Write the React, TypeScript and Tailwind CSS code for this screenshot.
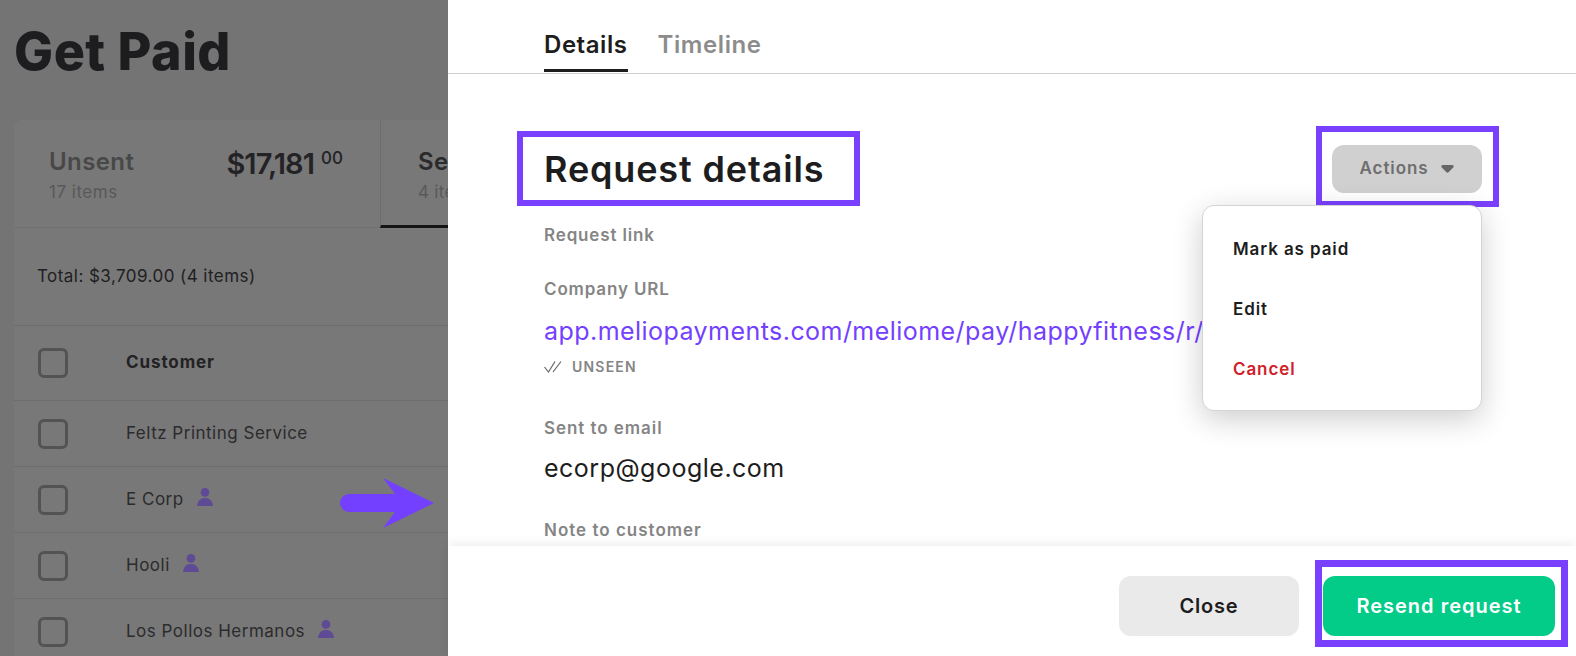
const customers = [
  { name: "Feltz Printing Service", linked: false },
  { name: "E Corp", linked: true },
  { name: "Hooli", linked: true },
  { name: "Los Pollos Hermanos", linked: true },
];

const PersonIcon = () => (
  <svg width="16" height="18" viewBox="0 0 16 18" fill="#5f4a96" className="ml-[13px] mb-[6px] shrink-0">
    <circle cx="8" cy="4.4" r="4.3" />
    <path d="M0 18C.6 12.4 3.8 10 8 10s7.4 2.4 8 8z" />
  </svg>
);

const Checkbox = () => <div className="w-[30px] h-[30px] rounded-[6px] border-[3px] border-[#535353] shrink-0" />;

const GetPaidPanel = () => (
  <aside className="w-[448px] shrink-0 h-full overflow-hidden bg-[#747474]">
    <h1 className="pl-[14px] pt-[24px] h-[80px] text-[52px] leading-[56px] font-extrabold text-[#1d1d20] tracking-[0.5px]">Get Paid</h1>
    <div className="mt-[40px] ml-[14px] w-[600px] h-[600px] rounded-t-lg bg-[#787878]">
      <div className="flex h-[108px] border-b border-[#707070]">
        <div className="w-[366px] shrink-0 pl-[35px] pr-[37px] pt-[27px] flex justify-between">
          <div>
            <div className="text-[24px] leading-[30px] font-semibold text-[#484848] tracking-[0.4px]">Unsent</div>
            <div className="text-[17px] leading-[22px] mt-[4px] text-[#585858] tracking-[0.5px]">17 items</div>
          </div>
          <div className="flex items-start text-[#232326] font-semibold">
            <span className="text-[29px] leading-[34px] tracking-[-0.9px]">$17,181</span>
            <span className="text-[17px] leading-[20px] ml-[7px] mt-[1px] font-medium">00</span>
          </div>
        </div>
        <div className="flex-1 pl-[37px] pt-[27px] border-l border-[#6e6e6e] border-b-[3px] border-b-[#141416] h-[108px]">
          <div className="text-[24px] leading-[30px] font-semibold text-[#2a2a2c] tracking-[0.3px]">Sent</div>
          <div className="text-[17px] leading-[22px] mt-[4px] text-[#585858] tracking-[0.3px]">4 items</div>
        </div>
      </div>
      <div className="h-[98px] flex items-center pl-[23px] border-b border-[#6e6e6e] text-[17px] text-[#202022] tracking-[0.45px]">
        Total: $3,709.00 (4 items)
      </div>
      <div className="h-[75px] flex items-center pl-[24px] border-b border-[#6e6e6e]">
        <Checkbox />
        <span className="ml-[58px] text-[17px] font-bold text-[#222224] tracking-[0.9px]">Customer</span>
      </div>
      {customers.map((c) => (
        <div key={c.name} className="h-[66px] flex items-center pl-[24px] border-b border-[#6e6e6e]">
          <Checkbox />
          <span className="ml-[58px] text-[17px] text-[#2b2b2d] tracking-[0.5px] whitespace-nowrap">{c.name}</span>
          {c.linked && <PersonIcon />}
        </div>
      ))}
    </div>
  </aside>
);

const DetailsDrawer = () => (
  <section className="flex-1 h-full flex flex-col bg-white relative">
    <div className="h-[74px] shrink-0 border-b border-[#d0d0d0] flex items-start gap-[30px] pl-[96px]">
      <div className="pt-[31px] pb-[10px] border-b-[3px] border-[#1d1d20] text-[24px] leading-[28px] font-semibold text-[#1d1d20] tracking-[0.55px]">Details</div>
      <div className="pt-[31px] text-[24px] leading-[28px] font-semibold text-[#8c8c8c] tracking-[0.6px]">Timeline</div>
    </div>

    <div className="flex-1 min-h-0 overflow-hidden pl-[96px] pr-[94px]">
      <div className="mt-[71px] h-[48px] flex items-center justify-between">
        <h2 className="relative text-[36px] leading-[44px] font-semibold text-[#1d1d20] tracking-[0.85px]">
          Request details
          <span className="absolute -left-[27px] -top-[16px] w-[343px] h-[75px] border-[6px] border-[#7a40ff]" />
        </h2>
        <div className="relative">
          <div className="w-[150px] h-[48px] rounded-[12px] bg-[#d0d0d0] flex items-center justify-center gap-[13px] text-[17px] font-semibold text-[#6e6e6e] tracking-[0.9px]">
            Actions
            <svg width="13" height="8" viewBox="0 0 14 9" fill="#666">
              <path d="M2 0h10c1.8 0 2.5 1.6 1.4 2.8L8.2 8.2c-.7.7-1.7.7-2.4 0L.6 2.8C-.5 1.6.2 0 2 0z" />
            </svg>
          </div>
          <span className="absolute -left-[16px] -top-[19px] w-[183px] h-[81px] border-[6px] border-[#7a40ff]" />
          <div className="absolute z-10 right-0 top-[60px] w-[280px] h-[206px] rounded-[12px] bg-white border border-[#d4d4d4] shadow-[0_8px_30px_rgba(0,0,0,0.2)] pl-[30px] pt-[31px] flex flex-col gap-[36px] text-[17px] leading-[24px] font-semibold text-[#1d1d20] tracking-[0.9px]">
            <div>Mark as paid</div>
            <div>Edit</div>
            <div className="text-[#d0202a]">Cancel</div>
          </div>
        </div>
      </div>

      <div className="mt-[32px] text-[17px] leading-[20px] font-semibold text-[#858585] tracking-[0.85px]">Request link</div>
      <div className="mt-[34px] text-[17px] leading-[20px] font-semibold text-[#858585] tracking-[0.85px]">Company URL</div>
      <div className="mt-[16px] text-[25px] leading-[32px] text-[#7340ff] tracking-[0.45px] whitespace-nowrap">app.meliopayments.com/meliome/pay/happyfitness/r/8271</div>
      <div className="mt-[12px] h-[16px] flex items-center gap-[10px] text-[14px] leading-[16px] font-semibold tracking-[1.2px] text-[#858585]">
        <svg width="18" height="12" viewBox="0 0 18 12" fill="none" stroke="#666" strokeWidth="1.2">
          <path d="M0.5 6L4.5 11L11 0.5M9 11L17 0.5" />
        </svg>
        UNSEEN
      </div>
      <div className="mt-[43px] text-[17px] leading-[20px] font-semibold text-[#858585] tracking-[0.95px]">Sent to email</div>
      <div className="mt-[14px] text-[25px] leading-[32px] text-[#1d1d20] tracking-[0.5px]">ecorp@google.com</div>
      <div className="mt-[36px] text-[17px] leading-[20px] font-semibold text-[#858585] tracking-[1px]">Note to customer</div>
    </div>

    <footer className="h-[110px] shrink-0 bg-white relative shadow-[0_-2px_10px_rgba(0,0,0,0.08)] flex justify-end gap-[24px] pt-[30px] pr-[21px]">
      <div className="w-[180px] h-[60px] rounded-[12px] bg-[#eaeaea] flex items-center justify-center text-[20px] font-semibold text-[#1d1d20] tracking-[0.8px]">Close</div>
      <div className="relative w-[232px] h-[60px] rounded-[12px] bg-[#03cb88] flex items-center justify-center text-[20px] font-semibold text-white tracking-[1px]">
        Resend request
        <span className="absolute -left-[8px] -top-[16px] w-[253px] h-[87px] border-[7px] border-[#7a40ff]" />
      </div>
    </footer>
  </section>
);

export default function App() {
  return (
    <div className="relative w-[1576px] h-[656px] flex overflow-hidden font-['Inter',sans-serif]">
      <GetPaidPanel />
      <DetailsDrawer />
      {/* callout arrow */}
      <svg className="absolute left-[340px] top-[478px]" width="94" height="50" viewBox="0 0 94 50" fill="#7340ff">
        <path d="M43 0L94 25L43 50L55 34H9a9 9 0 0 1 0-18H55z" />
      </svg>
    </div>
  );
}
